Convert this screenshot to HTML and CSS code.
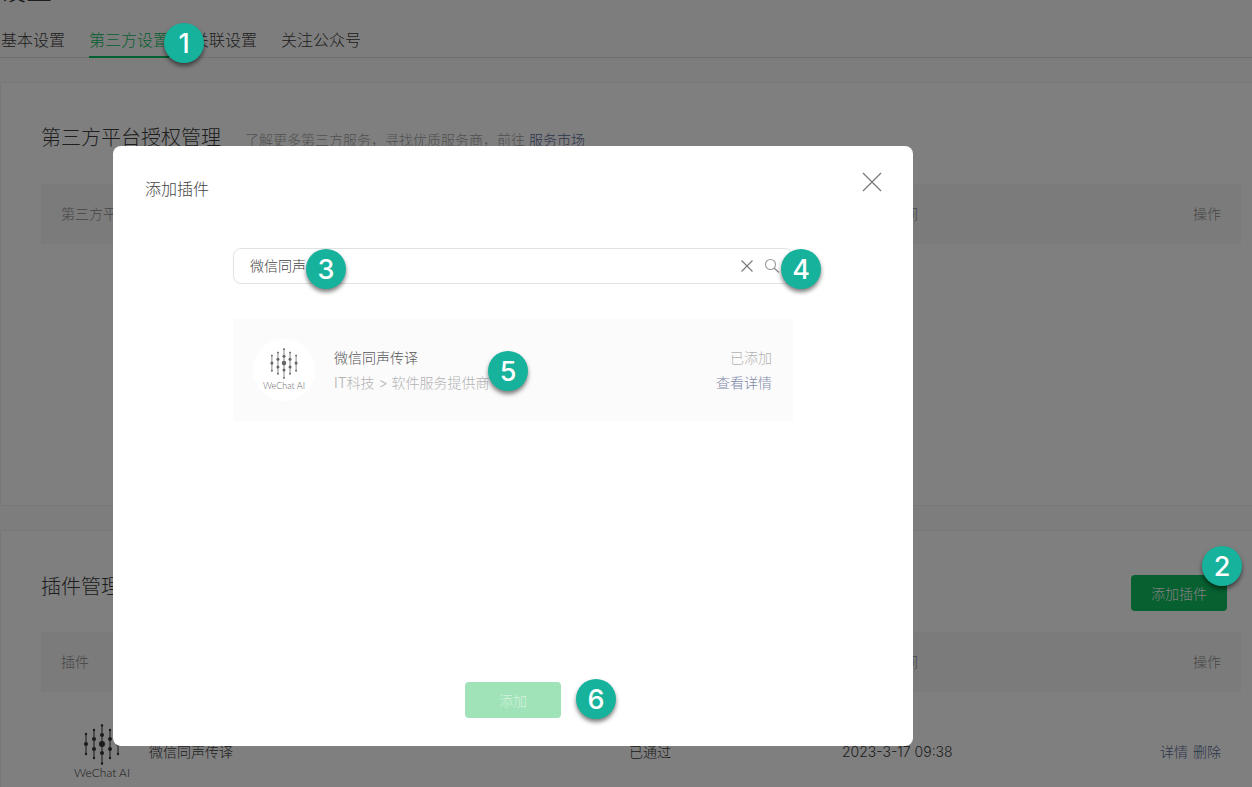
FILE: index.html
```html
<!DOCTYPE html>
<html lang="zh-CN">
<head>
    <meta charset="UTF-8">
    <title>设置</title>
    <link rel="stylesheet" href="styles.css">
</head>
<body>
    <svg class="defs" width="0" height="0">
        <symbol id="wechat-ai" viewBox="0 0 36 41">
            <g stroke="currentColor" stroke-width="1" fill="currentColor">
                <line x1="2" y1="9" x2="2" y2="31"/>
                <line x1="10" y1="5" x2="10" y2="35"/>
                <line x1="18" y1="0.5" x2="18" y2="40.5"/>
                <line x1="26" y1="5" x2="26" y2="35"/>
                <line x1="34" y1="9" x2="34" y2="31"/>
            </g>
            <g fill="currentColor">
                <circle cx="2" cy="10" r="1.2"/><circle cx="2" cy="20" r="2"/><circle cx="2" cy="30" r="1.2"/>
                <circle cx="10" cy="6" r="1.2"/><circle cx="10" cy="15" r="2"/><circle cx="10" cy="25" r="2"/><circle cx="10" cy="34" r="1.2"/>
                <circle cx="18" cy="1.5" r="1.2"/><circle cx="18" cy="11" r="2"/><circle cx="18" cy="20" r="3"/><circle cx="18" cy="29" r="2"/><circle cx="18" cy="39.5" r="1.2"/>
                <circle cx="26" cy="6" r="1.2"/><circle cx="26" cy="15" r="2"/><circle cx="26" cy="25" r="2"/><circle cx="26" cy="34" r="1.2"/>
                <circle cx="34" cy="10" r="1.2"/><circle cx="34" cy="20" r="2"/><circle cx="34" cy="30" r="1.2"/>
            </g>
        </symbol>
    </svg>

    <div class="page">
        <h1 class="page-title">设置</h1>
        <div class="tabs">
            <a class="tab">基本设置</a>
            <a class="tab active">第三方设置</a>
            <a class="tab">关联设置</a>
            <a class="tab">关注公众号</a>
        </div>

        <section class="card card-auth">
            <div class="card-head">
                <h2>第三方平台授权管理</h2>
                <p>了解更多第三方服务，寻找优质服务商，前往 <a class="link">服务市场</a></p>
            </div>
            <div class="table-row table-head">
                <span>第三方平台</span>
                <span>状态</span>
                <span class="time-title">授权时间</span>
                <span>操作</span>
            </div>
        </section>

        <section class="card card-plugin">
            <div class="card-head">
                <h2>插件管理</h2>
                <button class="btn-add">添加插件</button>
            </div>
            <div class="table-row table-head">
                <span>插件</span>
                <span>状态</span>
                <span class="time-title">添加时间</span>
                <span>操作</span>
            </div>
            <div class="table-row table-body">
                <div class="plugin-name">
                    <div class="logo logo-big">
                        <svg><use href="#wechat-ai"/></svg>
                        <span>WeChat AI</span>
                    </div>
                    <span>微信同声传译</span>
                </div>
                <span>已通过</span>
                <span>2023-3-17 09:38</span>
                <span class="ops"><a class="link">详情</a><a class="link">删除</a></span>
            </div>
        </section>
    </div>

    <div class="mask">
        <div class="modal">
            <div class="modal-title">添加插件</div>
            <svg class="modal-close" width="20" height="20" viewBox="0 0 20 20">
                <path d="M1 1 L19 19 M19 1 L1 19" stroke="#777" stroke-width="1.2" fill="none"/>
            </svg>

            <div class="search">
                <input class="search-input" type="text" value="微信同声">
                <svg class="icon-clear" width="14" height="14" viewBox="0 0 14 14">
                    <path d="M1.5 1.5 L12.5 12.5 M12.5 1.5 L1.5 12.5" stroke="#777" stroke-width="1.1" fill="none"/>
                </svg>
                <svg class="icon-search" width="16" height="16" viewBox="0 0 16 16">
                    <circle cx="6.5" cy="6.5" r="5" stroke="#999" stroke-width="1.1" fill="none"/>
                    <path d="M10.2 10.2 L15 14.6" stroke="#888" stroke-width="1.3" fill="none"/>
                </svg>
            </div>

            <div class="result">
                <div class="avatar">
                    <div class="logo logo-small">
                        <svg><use href="#wechat-ai"/></svg>
                        <span>WeChat AI</span>
                    </div>
                </div>
                <div class="result-info">
                    <div class="result-name">微信同声传译</div>
                    <div class="result-type">IT科技 &gt; 软件服务提供商</div>
                </div>
                <div class="result-side">
                    <div class="result-state">已添加</div>
                    <a class="result-link">查看详情</a>
                </div>
            </div>

            <div class="modal-foot">
                <button class="btn-submit">添加</button>
            </div>
        </div>
    </div>

    <!-- Numbered callouts on top of the screenshot -->
    <span class="callout c1">1</span>
    <span class="callout c2">2</span>
    <span class="callout c3">3</span>
    <span class="callout c4">4</span>
    <span class="callout c5">5</span>
    <span class="callout c6">6</span>
</body>
</html>
```

FILE: styles.css
```css
/* Global */
html, body {
    margin: 0;
    padding: 0;
    height: 787px;
    overflow: hidden;
}

body {
    position: relative;
    background-color: #fafafa;
    color: #3c3c3c;
    font-family: Inter, "Noto Sans CJK SC", sans-serif;
    font-size: 14px;
    font-weight: 300;
}

.defs {
    position: absolute;
}

/* Page behind the dialog */
.page {
    height: 787px;
    overflow: hidden;
}

.page-title {
    margin: -25px 0 0;
    font-size: 26px;
    font-weight: 300;
    line-height: 32px;
}

.tabs {
    display: flex;
    gap: 24px;
    padding: 22px 0 0 1px;
    height: 28px;
    border-bottom: 1px solid #e0e0e0;
    font-size: 16px;
    line-height: 22px;
}

.tab {
    height: 29px;
    box-sizing: border-box;
}

.tab.active {
    color: #07c160;
    border-bottom: 2px solid #07c160;
}

.card {
    margin-top: 24px;
    padding: 0 11px 0 41px;
    background-color: #ffffff;
    border: 1px solid #f0f0f0;
    border-right: 0;
    box-sizing: border-box;
}

.card-auth {
    height: 424px;
    padding-top: 41px;
}

.card-plugin {
    height: 300px;
    padding-top: 42px;
}

.card-head {
    display: flex;
    align-items: center;
    gap: 24px;
    height: 28px;
    margin-bottom: 32px;
    margin-left: -1px;
}

.card-head h2 {
    margin: 0;
    font-size: 20px;
    font-weight: 300;
    line-height: 28px;
}

.card-head p {
    margin: 2px 0 0;
    color: #a3a3a3;
    font-size: 14px;
}

.card-plugin .card-head {
    align-items: flex-start;
    justify-content: space-between;
    height: 38px;
    margin-bottom: 21px;
}

.btn-add {
    width: 96px;
    height: 36px;
    margin: 2px 14px 0 0;
    border: 0;
    border-radius: 4px;
    background-color: #0cc060;
    color: #ffffff;
    font: inherit;
}

.link {
    color: #576b95;
}

.table-row {
    display: grid;
    grid-template-columns: 568px 213px 1fr auto;
    align-items: center;
    margin-left: -1px;
    padding: 0 20px;
}

.table-head {
    height: 60px;
    background-color: #f7f7f7;
    color: #8c8c8c;
    line-height: 58px;
}

.time-title {
    padding-left: 20px;
}

.table-body {
    height: 120px;
    line-height: 18px;
}

.plugin-name {
    display: flex;
    align-items: center;
    gap: 19px;
    padding-left: 13px;
}

.logo {
    display: flex;
    flex-direction: column;
    align-items: center;
    font-family: Lato, "Liberation Sans", sans-serif;
    font-weight: 300;
    white-space: nowrap;
}

.logo-big {
    width: 56px;
    color: #353535;
    font-size: 12px;
    line-height: 14px;
}

.logo-big svg {
    width: 36px;
    height: 41px;
    margin-bottom: 1px;
}

.ops {
    display: flex;
    gap: 5px;
}

/* Dialog */
.mask {
    position: absolute;
    inset: 0;
    background-color: rgba(0, 0, 0, 0.5);
}

.modal {
    position: relative;
    display: flex;
    flex-direction: column;
    width: 800px;
    height: 600px;
    margin: 146px 0 0 113px;
    background-color: #ffffff;
    border-radius: 8px;
}

.modal-title {
    padding: 31px 32px 0;
    font-size: 16px;
    line-height: 24px;
    color: #444;
}

.modal-close {
    position: absolute;
    top: 26px;
    right: 31px;
}

.search {
    display: flex;
    align-items: center;
    width: 560px;
    height: 36px;
    box-sizing: border-box;
    margin: 47px auto 0;
    padding: 0 12px 0 16px;
    border: 1px solid #e2e2e2;
    border-radius: 8px;
}

.search-input {
    flex: 1;
    min-width: 0;
    border: 0;
    outline: 0;
    padding: 0 0 2px;
    color: #444;
    font: inherit;
}

.icon-clear {
    margin-right: 10px;
}

.result {
    display: flex;
    align-items: center;
    width: 560px;
    height: 102px;
    box-sizing: border-box;
    margin: 35px auto 0;
    padding: 0 21px 0 20px;
    background-color: #fbfbfb;
    line-height: 25px;
}

.avatar {
    display: flex;
    align-items: center;
    justify-content: center;
    width: 62px;
    height: 62px;
    border-radius: 50%;
    background-color: #ffffff;
}

.logo-small {
    color: #666;
    font-size: 9px;
    line-height: 12px;
}

.logo-small svg {
    width: 28px;
    height: 31px;
    margin-bottom: 1px;
}

.result-info {
    flex: 1;
    margin-left: 19px;
}

.result-name {
    color: #555;
}

.result-type {
    color: #b2b2b2;
}

.result-side {
    text-align: right;
}

.result-state {
    color: #b2b2b2;
}

.result-link {
    color: #7d89a8;
}

.modal-foot {
    display: flex;
    justify-content: center;
    margin-top: auto;
    padding-bottom: 28px;
}

.btn-submit {
    width: 96px;
    height: 36px;
    border: 0;
    border-radius: 4px;
    background-color: #a0e3b8;
    color: #d2f2de;
    font: inherit;
}

/* Callouts */
.callout {
    position: absolute;
    width: 40px;
    height: 40px;
    border-radius: 50%;
    background-color: #17b29b;
    box-shadow: 0 3px 4px rgba(0, 0, 0, 0.5);
    color: #ffffff;
    font-family: Inter, "Liberation Sans", sans-serif;
    font-size: 27px;
    font-weight: 500;
    line-height: 42px;
    text-align: center;
}

.c1 { left: 164px; top: 23px; }
.c2 { left: 1202px; top: 546px; }
.c3 { left: 306px; top: 249px; }
.c4 { left: 781px; top: 249px; }
.c5 { left: 488px; top: 351px; }
.c6 { left: 576px; top: 679px; }
```
